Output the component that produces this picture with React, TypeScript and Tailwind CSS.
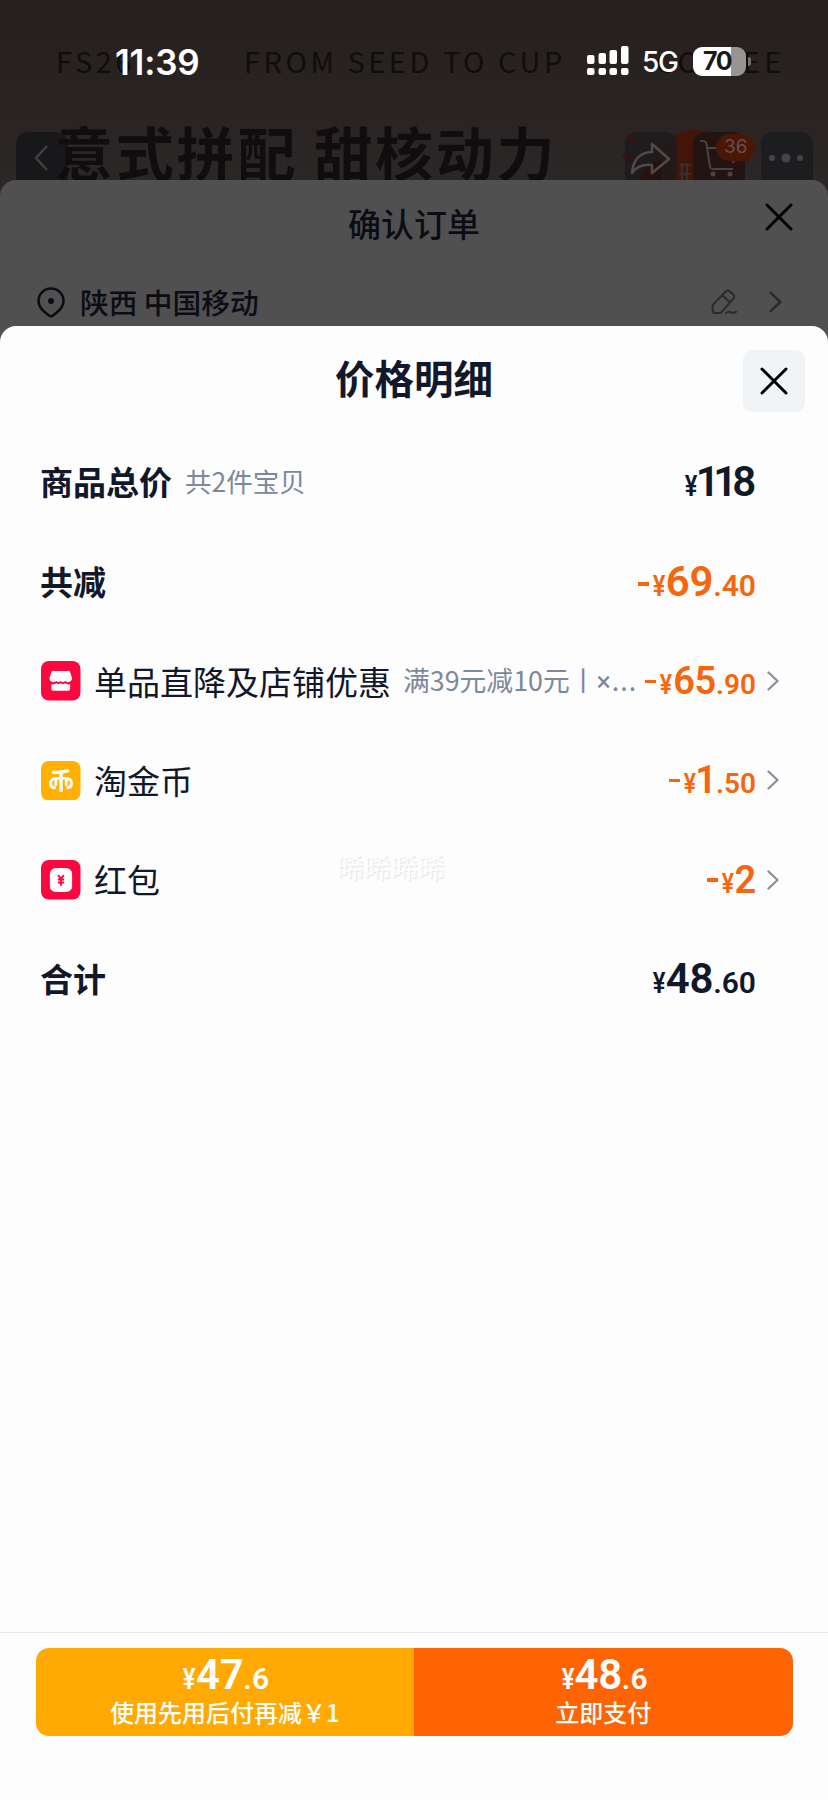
import type { ReactNode } from "react";

const cjk = "font-['Noto_Sans_CJK_SC',sans-serif]";

function Digits({ text }: { text: string }) {
  return (
    <>
      {text.split("").map((c, i) => (
        <span key={i} className={c === "1" ? "-ml-[1.5px] -mr-[5px]" : "-mr-[0.3px]"}>
          {c}
        </span>
      ))}
      {text.endsWith("1") && <span className="w-[4px]" />}
    </>
  );
}

function Price({
  whole,
  cents,
  minus = false,
  small = false,
  color,
}: {
  whole: string;
  cents?: string;
  minus?: boolean;
  small?: boolean;
  color: string;
}) {
  return (
    <span
      className={`flex shrink-0 items-baseline font-['Roboto',sans-serif] leading-none font-semibold ${color} ${small ? "text-[38px]" : "text-[42px]"}`}
    >
      {minus && <span className="mr-px h-[3.5px] w-[11px] -translate-y-[17px] self-end bg-current" />}
      <span className={`inline-block origin-right scale-x-[0.82] ${small ? "mr-px text-[28px]" : "text-[29px]"}`}>¥</span>
      <Digits text={whole} />
      {cents && (
        <span className={small ? "text-[28px]" : "text-[30px]"}>.{cents}</span>
      )}
    </span>
  );
}

function Chevron({ className }: { className: string }) {
  return (
    <svg viewBox="0 0 12 20" className={className} fill="none" stroke="currentColor" strokeWidth="2.3" strokeLinecap="round" strokeLinejoin="round">
      <path d="M1.5 1.5 10.5 10 1.5 18.5" />
    </svg>
  );
}

function Cross() {
  return (
    <svg viewBox="0 0 28 28" className="size-7" fill="none" stroke="currentColor" strokeWidth="3" strokeLinecap="round">
      <path d="M2 2 26 26M26 2 2 26" />
    </svg>
  );
}

function Row({ children, price, arrow = false }: { children: ReactNode; price: ReactNode; arrow?: boolean }) {
  return (
    <div className="flex h-[99.4px] items-center pr-[48px] pl-[40px]">
      <div className="flex min-w-0 flex-1 items-center">{children}</div>
      {price}
      <div className="flex w-[24px] shrink-0 justify-end text-[#8b8f98]">
        {arrow && <Chevron className="mr-px h-5 w-3" />}
      </div>
    </div>
  );
}

function ShopIcon() {
  return (
    <svg viewBox="0 0 40 40" className="ml-px size-[39.5px] shrink-0">
      <rect width="40" height="40" rx="8" fill="#fb0840" />
      <path d="M12.5 10h15a2 2 0 0 1 2 1.3l1.7 5.2a4 4 0 0 1-2.2 4.5c-1.7.8-3.3.3-4.5-.8-1.2 1.4-3.4 1.5-4.5.1-1.2 1.4-3.3 1.3-4.5-.1-1.2 1.1-2.8 1.6-4.500.8a4 4 0 0 1-2.200-4.500l1.700-5.200a2 2 0 0 1 2-1.300z" fill="#fff" />
      <path d="M10.500 23.500c2 .5 3.600.1 5-.9 1.500 1.100 3.300 1.100 4.500 0 1.400 1.100 3 1.100 4.500 0 1.400 1 3.200 1.400 5 .9v4.500a2 2 0 0 1-2 2h-15a2 2 0 0 1-2-2z" fill="#fff" />
    </svg>
  );
}

function CoinIcon() {
  return (
    <svg viewBox="0 0 40 40" className="ml-px size-[39.5px] shrink-0" fill="none" stroke="#fff" strokeWidth="3.4" strokeLinecap="round">
      <rect width="40" height="40" rx="8" fill="#ffb000" stroke="none" />
      <path d="M12.500 11.500c5 .3 10-.2 14.500-1.400M20.300 12v18" />
      <path d="M13.500 27c-2.200 0-3.700-1.600-3.700-4 0-3.600 2-5.400 5-5.400h11c3 0 5 1.800 5 5.400 0 2.400-1.500 4-3.700 4M15 18.500v5.500M25.600 18.500v5.500" strokeWidth="3" />
    </svg>
  );
}

function PacketIcon() {
  return (
    <svg viewBox="0 0 40 40" className="ml-px size-[39.5px] shrink-0">
      <rect width="40" height="40" rx="8" fill="#fb0840" />
      <rect x="9" y="8" width="22.5" height="24.5" rx="6" fill="#fff" />
      <path d="M17.3 15.3 20.2 19l2.9-3.7M20.2 19v7M17 19.8h6.4M17 22.8h6.4" fill="none" stroke="#fb0840" strokeWidth="1.9" />
    </svg>
  );
}

function Signal() {
  return (
    <svg viewBox="0 0 42 30" className="h-[30px] w-[42px]" fill="#fff">
      <rect x="0" y="9" width="7.5" height="9" rx="2" />
      <rect x="11.5" y="7" width="7.5" height="11" rx="2" />
      <rect x="22.5" y="4" width="7.5" height="14" rx="2" />
      <rect x="34" y="0" width="7.5" height="18" rx="2" />
      <rect x="0" y="22" width="7.5" height="7" rx="2" />
      <rect x="11.5" y="22" width="7.5" height="7" rx="2" />
      <rect x="22.5" y="22" width="7.5" height="7" rx="2" />
      <rect x="34" y="22" width="7.5" height="7" rx="2" />
    </svg>
  );
}

function StatusBar() {
  return (
    <div className="absolute inset-x-0 top-[38px] flex h-[46px] items-center pl-[115px] font-['Inter',sans-serif] text-white">
      <span className="w-[472px] pt-[2px] text-[35px] leading-none font-semibold tracking-[-0.2px]">11:39</span>
      <Signal />
      <span className="ml-[13px] w-[51px] pt-[2px] text-[28px] leading-none font-medium tracking-[-1.2px]">5G</span>
      <span className="flex h-[29px] w-[53px] items-center rounded-[9px] bg-[linear-gradient(90deg,#fff_71%,#989494_71%)] pl-[10px] text-[25px] leading-none font-bold tracking-[-1.3px] text-[#1c1919]">
        70
      </span>
      <span className="ml-[2px] h-[9px] w-[3px] rounded-r-full bg-[#777272]" />
    </div>
  );
}

function Backdrop() {
  return (
    <div className={`relative h-[180px] overflow-hidden text-[#0f0d0d] ${cjk}`}>
      <div className="absolute top-[38px] left-[56px] text-[29px] leading-[44px] tracking-[3.6px] whitespace-nowrap">FS26</div>
      <div className="absolute top-[38px] left-[244px] text-[29px] leading-[44px] tracking-[3.5px] whitespace-nowrap">FROM SEED TO CUP</div>
      <div className="absolute top-[38px] left-[656px] text-[29px] leading-[44px] tracking-[4px] whitespace-nowrap">COFFEE</div>

      <div className="absolute top-[132px] left-[16px] h-[60px] w-[52px] rounded-[12px] bg-[#18181a]" />
      <div className="absolute top-[116px] left-[55px] text-[58px] leading-[70px] font-bold tracking-[2.8px] whitespace-nowrap">意式拼配 甜核动力</div>
      <svg viewBox="0 0 14 26" className="absolute top-[145px] left-[34px] h-[26px] w-[14px]" fill="none" stroke="#403f40" strokeWidth="2.5">
        <path d="M13 1 2 13l11 12" />
      </svg>

      <svg viewBox="0 0 214 60" className="absolute top-[125px] left-[614px] h-[60px] w-[214px]">
        <path d="M40 34C50 14 66 5 80 5c22 0 50 12 51 30 0 12-3 18-8 25H34z" fill="#421508" />
        <rect x="11" y="7" width="52" height="60" rx="12" fill="#1b1a1d" opacity=".8" />
        <rect x="79" y="7" width="52" height="60" rx="12" fill="#1b1415" opacity=".85" />
        <rect x="147" y="7" width="52" height="60" rx="12" fill="#1d1c1f" />
        <path d="M26 57c0-12 13-20 22-23v24H26z" fill="#280e0c" opacity=".7" />
        <path d="M15 12l7 7M9 31l9 3M131 24l8-5M129 33l6 1" stroke="#3a1012" strokeWidth="4" />
        <path d="M65 40h12M65 49h12M68 38v18M73 38v18" stroke="#353030" strokeWidth="2" />
        <path d="M38 19 55 34 38 48v-8c-10-1-16 2-20 8 1-13 8-21 20-21z" fill="none" stroke="#4f4b4b" strokeWidth="2.5" strokeLinejoin="round" />
        <path d="M86 16h3c2 0 3 1 3.500 3L96 42c.5 1.500 1 2 2.500 2H119M93 23h10M119 38l2-7" fill="none" stroke="#4a4141" strokeWidth="2" />
        <circle cx="99" cy="49" r="2.5" fill="#4a4141" />
        <circle cx="116" cy="49" r="2.5" fill="#4a4141" />
        <rect x="102" y="9" width="39" height="27" rx="13.5" fill="#4a1707" />
        <circle cx="158" cy="33" r="3" fill="#454447" />
        <circle cx="172" cy="33" r="4.5" fill="#454447" />
        <circle cx="186" cy="33" r="3" fill="#454447" />
      </svg>
      <span className="absolute top-[136px] left-[724px] font-['Inter',sans-serif] text-[19px] leading-[22px] text-[#65504a]">36</span>
    </div>
  );
}

function OrderSheet() {
  return (
    <div className={`h-[147px] rounded-t-[16px] bg-[#505050] text-[#0c0d14] ${cjk}`}>
      <div className="flex h-[76px] items-start pr-[35px] pl-[63px]">
        <h2 className="flex-1 pt-[21px] text-center text-[33px] leading-[44px] font-medium">确认订单</h2>
        <span className="pt-[23px] text-black">
          <Cross />
        </span>
      </div>
      <div className="flex h-[90px] items-center pt-px pr-[46px] pl-[36px]">
        <svg viewBox="0 0 30 32" className="h-8 w-[30px]" fill="none" stroke="currentColor" strokeWidth="2.6">
          <path d="M15 2.500a12.500 12.500 0 0 1 12.500 12.500c0 5-3 8.500-7 11.800l-3.500 2.700a3.200 3.200 0 0 1-4 0l-3.500-2.700c-4-3.300-7-6.800-7-11.800A12.500 12.500 0 0 1 15 2.500z" />
          <circle cx="15" cy="15" r="3" fill="currentColor" stroke="none" />
        </svg>
        <span className="ml-[14px] flex-1 text-[28.7px] leading-[40px] font-medium">陕西 中国移动</span>
        <svg viewBox="0 0 26 26" className="mr-[32px] h-[26px] w-[26px] text-[#292a2d]" fill="none" stroke="currentColor" strokeWidth="2" strokeLinecap="round" strokeLinejoin="round">
          <path d="M14.500 2.800a3 3 0 0 1 4.200-.4l3.400 2.900a3 3 0 0 1 .3 4.200L10.800 22.800c-.7.9-1.500 1.300-2.500 1.300H4.500c-2 0-3-1-3-3v-3.600c0-1 .3-1.600 1-2.400zM11.500 6.500l7.300 6.500M15 24c2-2 3.500-1.500 5-.7s3 .6 5-.5" />
        </svg>
        <Chevron className="h-[22px] w-[13px] text-[#292a2d]" />
      </div>
    </div>
  );
}

export default function App() {
  const dark = "text-[#11182a]";
  const orange = "text-[#f5660e]";
  return (
    <div className="relative flex h-[1800px] w-[828px] flex-col overflow-hidden bg-[linear-gradient(180deg,#25201d_0,#2c2727_180px,#2c2727_200px,#505050_200px)]">
      <Backdrop />
      <OrderSheet />
      <StatusBar />

      <section className={`relative -mt-px flex flex-1 flex-col rounded-t-[16px] bg-[#fdfdfd] ${dark} ${cjk}`}>
        <header className="flex h-[106.6px] items-center pr-[23px] pl-[85px]">
          <h1 className="-mt-[4px] flex-1 text-center text-[39.5px] leading-[56px] font-bold">价格明细</h1>
          <button className="mt-[3px] flex size-[62px] items-center justify-center rounded-[9px] bg-[#f1f4f7] text-black">
            <Cross />
          </button>
        </header>

        <main className="relative flex-1 text-[33px] leading-[48px]">
          <Row price={<Price whole="118" color={dark} />}>
            <span className="-mt-[2px] font-bold">商品总价</span>
            <span className="-mt-[2px] ml-[13px] text-[26.5px] text-[#7c889c]">共2件宝贝</span>
          </Row>
          <Row price={<Price minus whole="69" cents="40" color={orange} />}>
            <span className="-mt-[2px] font-bold">共减</span>
          </Row>
          <Row arrow price={<Price minus small whole="65" cents="90" color={orange} />}>
            <ShopIcon />
            <span className="ml-[13.5px] shrink-0">单品直降及店铺优惠</span>
            <span className="-mt-px ml-[12px] w-0 flex-1 text-[26.8px] whitespace-nowrap text-[#7c889c]">
              满39元减10元丨<span className="font-['Roboto',sans-serif]">×</span>
              <span className="ml-px tracking-[1px]">...</span>
            </span>
          </Row>
          <Row arrow price={<Price minus small whole="1" cents="50" color={orange} />}>
            <CoinIcon />
            <span className="-mt-px ml-[13.5px]">淘金币</span>
          </Row>
          <Row arrow price={<Price minus small whole="2" color={orange} />}>
            <PacketIcon />
            <span className="-mt-px ml-[13.5px]">红包</span>
          </Row>
          <Row price={<Price whole="48" cents="60" color={dark} />}>
            <span className="-mt-[2px] font-bold">合计</span>
          </Row>
          <span className="absolute top-[410px] left-[337px] text-[27px] text-[#fdfdfd] [text-shadow:1px_1px_1px_#e2e2e2]">晞晞晞晞</span>
        </main>

        <footer className="h-[168px] border-t border-[#e6e8eb] px-[35.5px] pt-[15px]">
          <div className="flex h-[88px] overflow-hidden rounded-[13px] text-[24px] leading-[34px] font-medium text-white">
            <button className="flex flex-1 flex-col items-center bg-[#ffa902] pt-[6px]">
              <Price whole="47" cents="6" color="text-white" />
              <span className="-mt-px whitespace-nowrap">使用先用后付再减￥1</span>
            </button>
            <button className="flex flex-1 flex-col items-center bg-[#ff6403] pt-[6px]">
              <Price whole="48" cents="6" color="text-white" />
              <span className="-mt-px">立即支付</span>
            </button>
          </div>
        </footer>
      </section>
    </div>
  );
}
